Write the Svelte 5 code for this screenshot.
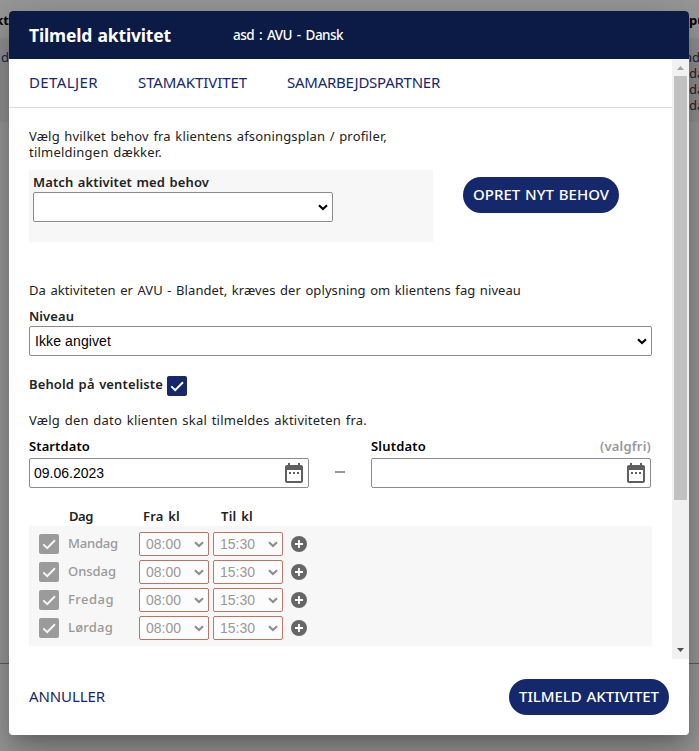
<script>
  const tabs = [
    { label: 'DETALJER', width: 69 },
    { label: 'STAMAKTIVITET', width: 109 },
    { label: 'SAMARBEJDSPARTNER', width: 153 }
  ];
  const days = ['Mandag', 'Onsdag', 'Fredag', 'Lørdag'];
  const dayWidths = [50, 48, 46, 45];

  // Spreads the letters of a label over its column width.
  function fit(node, width) {
    node.style.letterSpacing = '0';
    const natural = node.getBoundingClientRect().width;
    node.style.letterSpacing = `${(width - natural) / node.textContent.length}px`;
  }
</script>

{#snippet chevron()}
  <svg class="chevron" viewBox="0 0 10 7" width="10" height="7"><path d="M1 1.2 5 5l4-3.8" /></svg>
{/snippet}

{#snippet check()}
  <svg viewBox="0 0 20 20" width="20" height="20"><path d="M4.3 10.4 8.2 14.2 16 6.2" /></svg>
{/snippet}

{#snippet calendar()}
  <svg class="calendar" viewBox="0 0 18 20" width="18" height="20">
    <path fill-rule="evenodd" d="M3 0h2v2h8V0h2v2h1a2 2 0 0 1 2 2v14a2 2 0 0 1-2 2H2a2 2 0 0 1-2-2V4a2 2 0 0 1 2-2h1zM2 7v11h14V7zM4 9h2v2H4zM8 9h2v2H8zM12 9h2v2h-2z" />
  </svg>
{/snippet}

<div class="page">
  <div class="backdrop">
    <div class="left"><b>kt</b><span>d</span></div>
    <div class="right"><b>pu</b><span class="shift">nd</span><span>da</span><span>da</span><span>da</span></div>
    <hr />
  </div>

  <div class="modal">
    <header>
      <h1><span use:fit={142}>Tilmeld aktivitet</span></h1>
      <div class="sub"><span use:fit={110}>asd : AVU - Dansk</span></div>
    </header>

    <div class="scroller">
      <div class="content">
        <nav>
          {#each tabs as tab}
            <a><span use:fit={tab.width}>{tab.label}</span></a>
          {/each}
        </nav>

        <main>
          <div class="text intro">
            <span use:fit={358}>Vælg hvilket behov fra klientens afsoningsplan / profiler,</span><br />
            <span use:fit={133}>tilmeldingen dækker.</span>
          </div>

          <div class="match">
            <div class="matchbox">
              <div class="label"><span use:fit={176}>Match aktivitet med behov</span></div>
              <div class="field">{@render chevron()}</div>
            </div>
            <button class="create"><span use:fit={136}>OPRET NYT BEHOV</span></button>
          </div>

          <div class="text level"><span use:fit={492}>Da aktiviteten er AVU - Blandet, kræves der oplysning om klientens fag niveau</span></div>
          <div class="label niveau"><span use:fit={45}>Niveau</span></div>
          <div class="field"><span use:fit={76}>Ikke angivet</span>{@render chevron()}</div>

          <div class="wait label">
            <span use:fit={134}>Behold på venteliste</span>
            <i class="check">{@render check()}</i>
          </div>

          <div class="text date-text"><span use:fit={338}>Vælg den dato klienten skal tilmeldes aktiviteten fra.</span></div>

          <div class="dates">
            <div class="date">
              <div class="label dark"><span use:fit={61}>Startdato</span></div>
              <div class="field"><span use:fit={70}>09.06.2023</span>{@render calendar()}</div>
            </div>
            <i class="dash"></i>
            <div class="date">
              <div class="label dark"><span use:fit={55}>Slutdato</span><span class="optional" use:fit={51}>(valgfri)</span></div>
              <div class="field">{@render calendar()}</div>
            </div>
          </div>

          <div class="heads label">
            <div><span use:fit={24}>Dag</span></div>
            <div><span use:fit={37}>Fra kl</span></div>
            <div><span use:fit={32}>Til kl</span></div>
          </div>
          <div class="days">
            {#each days as day, i}
              <div class="day">
                <i class="check">{@render check()}</i>
                <div class="name"><span use:fit={dayWidths[i]}>{day}</span></div>
                <div class="time"><span use:fit={35}>08:00</span>{@render chevron()}</div>
                <div class="time"><span use:fit={35}>15:30</span>{@render chevron()}</div>
                <svg class="plus" viewBox="0 0 16 16" width="16" height="16">
                  <circle cx="8" cy="8" r="8" /><path d="M8 4v8M4 8h8" />
                </svg>
              </div>
            {/each}
          </div>
        </main>
      </div>

      <div class="scrollbar">
        <svg viewBox="0 0 17 17" width="17" height="17"><path fill="#a3a3a3" d="M5 11h7L8.500 7z" /></svg>
        <div class="thumb"></div>
        <svg viewBox="0 0 17 17" width="17" height="17"><path fill="#505050" d="M5 6h7l-3.500 4z" /></svg>
      </div>
    </div>

    <footer>
      <a><span use:fit={76}>ANNULLER</span></a>
      <button><span use:fit={140}>TILMELD AKTIVITET</span></button>
    </footer>
  </div>
</div>

<style>
  :global(body) { margin: 0; overflow: hidden; }
  .page, .page * { box-sizing: border-box; }
  .page {
    position: relative;
    width: 699px;
    height: 751px;
    padding: 11px 10px 16px 9px;
    overflow: hidden;
    background: linear-gradient(#989898 0 38px, #909090 38px 122px, #989898 122px);
    font-family: "Noto Sans", sans-serif;
    color: #222;
  }
  span { white-space: nowrap; display: inline-block; }
  svg { display: block; flex: none; }
  .backdrop { position: absolute; inset: 0; font-size: 13px; line-height: 16px; color: #20232b; }
  .left, .right { position: absolute; top: 12px; display: flex; flex-direction: column; }
  .left { right: 690px; align-items: flex-end; }
  .left span { color: #142452; }
  .right { left: 689px; }
  .right .shift { margin-left: -5px; }
  .backdrop b { margin-bottom: 21px; color: #000; }
  hr { position: absolute; top: 663px; left: 0; right: 0; margin: 0; border: 0; border-top: 1px solid #5c5c5c; }
  .modal {
    position: relative;
    display: flex;
    flex-direction: column;
    height: 724px;
    border-radius: 4px;
    background: #fff;
    overflow: hidden;
    box-shadow: 0 11px 15px -7px rgba(0,0,0,.2), 0 24px 38px 3px rgba(0,0,0,.14), 0 9px 46px 8px rgba(0,0,0,.12);
  }
  header { display: flex; align-items: center; height: 48px; padding-left: 20px; background: #0c1b46; color: #fff; flex: none; }
  h1 { width: 204px; margin: 0; font-size: 17.5px; font-weight: 700; line-height: 24px; word-spacing: 1px; }
  .sub { font-size: 13.5px; font-weight: 500; line-height: 18px; word-spacing: 2px; }
  .scroller { display: flex; height: 600px; flex: none; }
  .content { width: 663px; }
  nav { display: flex; gap: 40px; height: 49px; padding: 11px 20px 0; border-bottom: 1px solid #dcdcdc; font-size: 15px; line-height: 24px; color: #14286b; }
  main { padding: 20px 20px 0; }
  .text { font-size: 13px; line-height: 16px; word-spacing: 1px; }
  .intro { height: 42px; }
  .label { font-size: 13px; font-weight: 600; line-height: 16px; color: #222; word-spacing: 1px; }
  .match { display: flex; align-items: flex-start; gap: 30px; }
  .matchbox { width: 404px; height: 72px; padding: 4px 4px 0; background: #f7f7f7; }
  .matchbox .label { height: 18px; }
  .matchbox .field { width: 300px; }
  .field { display: flex; align-items: center; justify-content: space-between; height: 30px; padding: 0 4px 0 5px; border: 1px solid #8c8c8c; border-radius: 2px; background: #fff; font: 14px "Liberation Sans", sans-serif; word-spacing: 0; color: #000; }
  .chevron { margin-left: auto; fill: none; stroke: #000; stroke-width: 2.1; }
  .niveau { height: 18px; }
  .calendar { margin-left: auto; fill: #5f5f5f; }
  button { display: flex; align-items: center; justify-content: center; height: 36px; border: 0; border-radius: 18px; padding: 0 0 2px; background: #14286b; color: #fff; font: 500 15px/20px "Noto Sans", sans-serif; word-spacing: 1px; }
  .create { width: 156px; margin-top: 7px; }
  .level { margin: 40px 0 10px; }
  .wait { display: flex; gap: 4px; height: 20px; margin: 20px 0 16px; }
  .check { display: block; width: 20px; height: 20px; border-radius: 2px; background: #14286b; flex: none; }
  .check svg { fill: none; stroke: #fff; stroke-width: 2; }
  .date-text { margin-bottom: 10px; }
  .dates { display: flex; }
  .date { width: 280px; }
  .date .label { display: flex; justify-content: space-between; height: 20px; color: #000; }
  .date .label .optional { color: #999; }
  .date .field { padding: 0 5px 0 4px; }
  .dash { width: 10px; height: 2px; margin: 33px 26px 0; background: #999; }
  .heads { display: flex; height: 18px; margin-top: 20px; padding-left: 40px; }
  .heads div:nth-child(1) { width: 74px; }
  .heads div:nth-child(2) { width: 78px; }
  .days { height: 120px; padding: 6px 10px 0; background: #f7f7f7; }
  .day { display: flex; align-items: center; height: 24px; margin-bottom: 4px; }
  .day .check { background: #9b9b9b; }
  .day .check svg { stroke: #f7f7f7; }
  .name { width: 71px; height: 22px; margin-left: 9px; font-size: 13px; font-weight: 500; line-height: 20px; color: #999; }
  .time { display: flex; align-items: center; width: 70px; height: 24px; margin-right: 4px; padding: 0 4px 0 6px; border: 1px solid #bd7468; border-radius: 2px; background: #fcfcfc; font: 14px "Liberation Sans", sans-serif; color: #999; }
  .time .chevron { stroke: #8e8e8e; }
  .plus { margin-left: 4px; fill: #666; }
  .plus path { stroke: #fff; stroke-width: 1.8; }
  .scrollbar { display: flex; flex-direction: column; width: 17px; background: #f1f1f1; }
  .scrollbar svg:last-child { margin-top: auto; }
  .thumb { width: 13px; height: 424px; margin: 0 2px; background: #c1c1c1; }
  footer { display: flex; align-items: center; justify-content: space-between; height: 76px; padding: 0 20px; font-size: 15px; line-height: 20px; color: #14286b; }
  footer a { margin-top: -2px; }
  footer button { width: 160px; }
</style>
